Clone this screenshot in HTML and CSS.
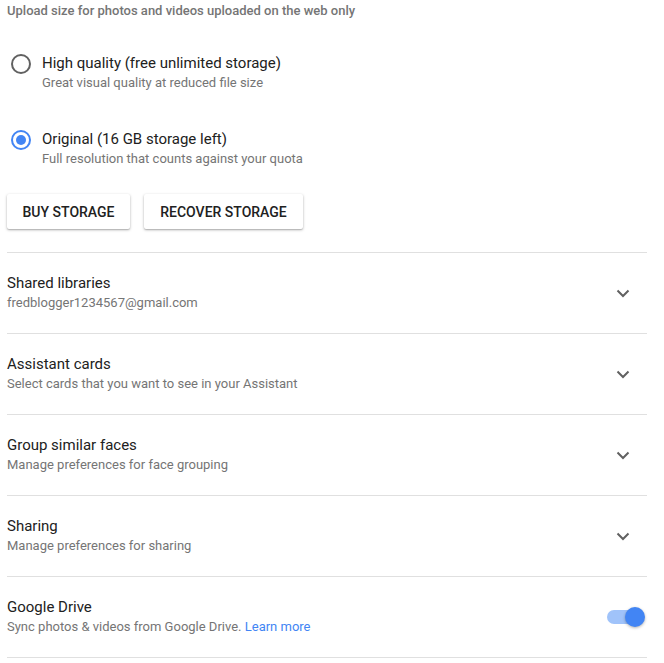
FILE: index.html
```html
<!DOCTYPE html>
<html>
<head>
<meta charset="utf-8">
<link rel="stylesheet" href="styles.css">
</head>
<body>
<div class="page">
  <div class="upload">
    <div class="heading">Upload size for photos and videos uploaded on the web only</div>
    <div class="options">
      <div class="option">
        <span class="radio"></span>
        <div class="texts">
          <div class="title">High quality (free unlimited storage)</div>
          <div class="sub">Great visual quality at reduced file size</div>
        </div>
      </div>
      <div class="option">
        <span class="radio checked"></span>
        <div class="texts">
          <div class="title">Original (16 GB storage left)</div>
          <div class="sub">Full resolution that counts against your quota</div>
        </div>
      </div>
    </div>
    <div class="buttons">
      <button class="btn btn-buy">BUY STORAGE</button>
      <button class="btn btn-recover">RECOVER STORAGE</button>
    </div>
  </div>

  <div class="row">
    <div class="texts">
      <div class="title">Shared libraries</div>
      <div class="sub">fredblogger1234567@gmail.com</div>
    </div>
    <svg class="chev" width="14" height="9" viewBox="0 0 14 9"><path d="M1.5 1.5 L7 7 L12.5 1.5" fill="none" stroke="#616161" stroke-width="2"/></svg>
  </div>
  <div class="row">
    <div class="texts">
      <div class="title">Assistant cards</div>
      <div class="sub">Select cards that you want to see in your Assistant</div>
    </div>
    <svg class="chev" width="14" height="9" viewBox="0 0 14 9"><path d="M1.5 1.5 L7 7 L12.5 1.5" fill="none" stroke="#616161" stroke-width="2"/></svg>
  </div>
  <div class="row">
    <div class="texts">
      <div class="title">Group similar faces</div>
      <div class="sub">Manage preferences for face grouping</div>
    </div>
    <svg class="chev" width="14" height="9" viewBox="0 0 14 9"><path d="M1.5 1.5 L7 7 L12.5 1.5" fill="none" stroke="#616161" stroke-width="2"/></svg>
  </div>
  <div class="row">
    <div class="texts">
      <div class="title">Sharing</div>
      <div class="sub">Manage preferences for sharing</div>
    </div>
    <svg class="chev" width="14" height="9" viewBox="0 0 14 9"><path d="M1.5 1.5 L7 7 L12.5 1.5" fill="none" stroke="#616161" stroke-width="2"/></svg>
  </div>
  <div class="row">
    <div class="texts">
      <div class="title">Google Drive</div>
      <div class="sub">Sync photos &amp; videos from Google Drive. <a class="link">Learn more</a></div>
    </div>
    <span class="toggle"><span class="track"></span><span class="thumb"></span></span>
  </div>
</div>
</body>
</html>
```

FILE: styles.css
```css
html, body {
  margin: 0;
  padding: 0;
  background: #fff;
}
body {
  font-family: Roboto, "Noto Sans", sans-serif;
  color: #212121;
}
.page {
  width: 640px;
  margin-left: 7px;
}
.upload {
  padding-top: 1px;
  border-bottom: 1px solid #e0e0e0;
  padding-bottom: 23px;
}
.heading {
  font-size: 13px;
  font-weight: 500;
  line-height: 20px;
  color: #757575;
}
.options {
  display: flex;
  flex-direction: column;
  gap: 37px;
  margin-top: 32px;
}
.option {
  display: flex;
  align-items: flex-start;
}
.radio {
  box-sizing: border-box;
  width: 20px;
  height: 20px;
  border: 2px solid #616161;
  border-radius: 50%;
  margin: 1px 11px 0 4px;
  flex: none;
  display: flex;
  align-items: center;
  justify-content: center;
}
.radio.checked {
  border-color: #4285f4;
}
.radio.checked::after {
  content: "";
  width: 10px;
  height: 10px;
  border-radius: 50%;
  background: #4285f4;
}
.title {
  font-size: 15px;
  line-height: 20px;
  color: #212121;
}
.sub {
  font-size: 13px;
  line-height: 18px;
  color: #757575;
  margin-top: 1px;
}
.buttons {
  display: flex;
  gap: 14px;
  margin-top: 26px;
}
.btn {
  font-family: Roboto, "Noto Sans", sans-serif;
  font-size: 14px;
  font-weight: 500;
  color: #212121;
  background: #fff;
  border: none;
  border-radius: 2px;
  height: 35px;
  padding: 0;
  box-shadow: 0 1px 3px rgba(0,0,0,0.28), 0 1px 1px rgba(0,0,0,0.12);
}
.btn-buy { width: 123px; }
.btn-recover { width: 159px; }
.row {
  display: flex;
  align-items: center;
  justify-content: space-between;
  border-bottom: 1px solid #e0e0e0;
  height: 80px;
}
.row .texts {
  padding-bottom: 2px;
}
.chev {
  margin-right: 17px;
  flex: none;
}
.link {
  color: #4285f4;
  text-decoration: none;
}
.toggle {
  position: relative;
  width: 38px;
  height: 20px;
  margin-right: 2px;
  flex: none;
}
.track {
  position: absolute;
  left: 0;
  top: 3px;
  width: 34px;
  height: 14px;
  border-radius: 7px;
  background: #a0c3fa;
}
.thumb {
  position: absolute;
  right: 0;
  top: 0;
  width: 20px;
  height: 20px;
  border-radius: 50%;
  background: #4285f4;
  box-shadow: 0 1px 3px rgba(0,0,0,0.3);
}
```
